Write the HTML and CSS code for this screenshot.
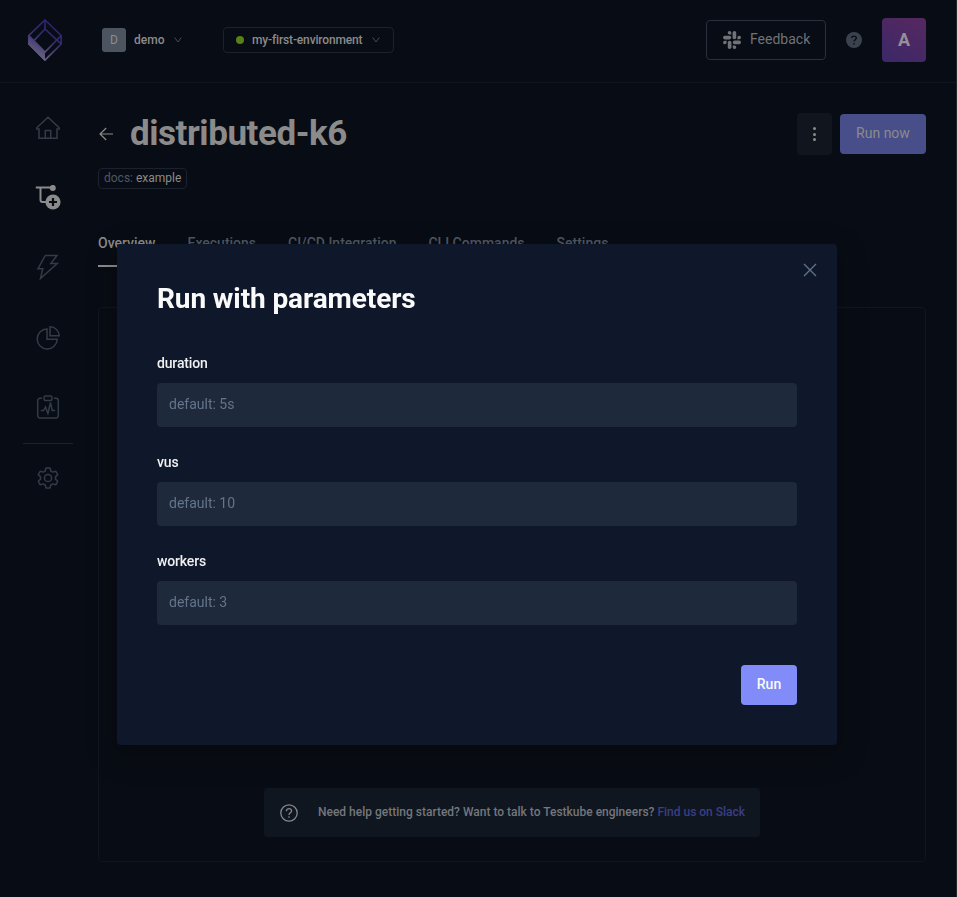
FILE: index.html
```html
<!DOCTYPE html>
<html lang="en">
<head>
<meta charset="utf-8">
<title>distributed-k6</title>
<link rel="stylesheet" href="styles.css">
</head>
<body>
<div class="app">
  <header class="topbar">
    <svg class="logo" width="36" height="44" viewBox="0 0 36 44" fill="none">
      <defs><linearGradient id="lg" x1="26" y1="4" x2="8" y2="38" gradientUnits="userSpaceOnUse"><stop offset="0" stop-color="#2b2071"/><stop offset=".45" stop-color="#352c70"/><stop offset="1" stop-color="#69647f"/></linearGradient></defs>
      <path d="M18 2 34.2 17.500V26L18 42 1.800 26V17.500Z M18 2v9 M1.800 17.500 18 34 34.200 17.500 M18 11 7.500 22 M18 11 34.200 26" stroke="url(#lg)" stroke-width="1.700"/>
      <path d="M1 17 18 34v9L1 26Z" fill="url(#lg)"/>
    </svg>
    <div class="org"><span class="org-badge">D</span><span>demo</span>
      <svg class="chev" width="8" height="6" viewBox="0 0 8 6"><path d="M.7.5 4 5 7.3.5"/></svg></div>
    <div class="env"><i class="dot"></i><span>my-first-environment</span>
      <svg class="chev" width="8" height="6" viewBox="0 0 8 6"><path d="M.7.5 4 5 7.3.5"/></svg></div>
    <div class="top-actions">
      <button class="feedback">
        <svg width="18" height="18" viewBox="0 0 18 18" fill="#6f7278"><rect x="0" y="4.8" width="8.2" height="3.6" rx="1.8"/><rect x="9.6" y="0" width="3.6" height="8.2" rx="1.8"/><rect x="9.8" y="9.6" width="8.2" height="3.6" rx="1.8"/><rect x="4.8" y="9.8" width="3.6" height="8.2" rx="1.8"/><path d="M8.3 3.6H6.6A1.8 1.8 0 1 1 8.3 1.8ZM14.4 8.3V6.6a1.8 1.8 0 1 1 1.8 1.7ZM9.7 14.4h1.7a1.8 1.8 0 1 1-1.7 1.8ZM3.6 9.7v1.7a1.8 1.8 0 1 1-1.8-1.7Z"/></svg>
        <span>Feedback</span>
      </button>
      <svg class="help" width="16" height="16" viewBox="0 0 16 16"><circle cx="8" cy="8" r="8" fill="#3b424e"/><path d="M5.6 6.1C5.7 3.5 10.3 3.5 10.3 6.1 10.3 7.6 8 7.8 8 9.6M8 11v1.5" fill="none" stroke="#080c14" stroke-width="1.4"/></svg>
      <div class="avatar">A</div>
    </div>
  </header>
  <div class="body">
    <nav class="side">
      <svg width="26" height="26" viewBox="0 0 26 26"><path d="M13 2.200 1.800 12.800V14H4v9.300h18V14h2.200v-1.200ZM10.300 23v-7.500h5.400V23"/></svg>
      <svg class="active" width="26" height="26" viewBox="0 0 26 26"><path d="M.8 2.500h17M5.500 2.500v12.500a2 2 0 0 0 2 2h5" fill="none" stroke-width="2"/><circle cx="17.800" cy="2.900" r="3" stroke="none"/><circle cx="18" cy="17" r="7.600" stroke="none"/><path d="M18 13v8M14 17h8" stroke="#080c14" stroke-width="2.200"/></svg>
      <svg width="26" height="26" viewBox="0 0 26 26"><path d="M10.300 1.500H22l-6.200 8h6.400L5.500 24.500l2.300-9.800H3Z"/></svg>
      <svg width="26" height="26" viewBox="0 0 26 26"><path d="M12 4A10 10 0 1 0 22.200 14.300H12ZM15 1.800v9h9.300a9.300 9.300 0 0 0-9.300-9Z"/></svg>
      <svg width="26" height="26" viewBox="0 0 26 26"><path d="M7 4.300H5a2.300 2.300 0 0 0-2.300 2.300v15a2.300 2.300 0 0 0 2.300 2.300h16a2.300 2.300 0 0 0 2.300-2.300v-15A2.300 2.300 0 0 0 21 4.300h-2"/><rect x="9" y="2" width="8" height="4.400" rx="1.500"/><path d="M5.800 16.500h2.700l2-3.500 2.400 6.500 2.600-11 1.700 8h3"/></svg>
      <hr>
      <svg width="26" height="26" viewBox="0 0 26 26"><path d="M11 3h4l.8 3 1.900 1.100 3-.9 2 3.500-2.200 2.200v2.200l2.200 2.200-2 3.500-3-.9-1.900 1.100-.8 3h-4l-.8-3-1.900-1.100-3 .9-2-3.500 2.200-2.200v-2.200L3.300 9.700l2-3.500 3 .9L10.200 6Z" stroke-linejoin="round"/><circle cx="13" cy="13" r="3.600"/></svg>
    </nav>
    <main class="main">
      <div class="heading">
        <svg class="back" width="16" height="16" viewBox="0 0 16 16"><path d="M15 8H1.800M8.200 2 2 8l6.200 6"/></svg>
        <h1>distributed-k6</h1>
        <button class="more"><i></i><i></i><i></i></button>
        <button class="run-now">Run now</button>
      </div>
      <div class="tag"><span>docs: </span>example</div>
      <div class="tabs"><span class="on">Overview</span><span>Executions</span><span>CI/CD Integration</span><span>CLI Commands</span><span>Settings</span></div>
      <section class="panel">
        <div class="notice">
          <svg width="18" height="18" viewBox="0 0 18 18"><circle cx="9" cy="9" r="8.200"/><path d="M6.400 7.200c0-3.500 5.300-3.300 5.200-.2C11.600 8.800 9 8.900 9 10.900M9 12.200v1.500"/></svg>
          <p>Need help getting started? Want to talk to Testkube engineers? <a>Find us on Slack</a></p>
        </div>
      </section>
    </main>
  </div>
</div>
<div class="overlay">
  <div class="modal">
    <svg class="close" width="14" height="14" viewBox="0 0 14 14"><path d="m1 1 12 12M13 1 1 13"/></svg>
    <h2>Run with parameters</h2>
    <label>duration<input placeholder="default: 5s"></label>
    <label>vus<input placeholder="default: 10"></label>
    <label>workers<input placeholder="default: 3"></label>
    <button class="run">Run</button>
  </div>
</div>
</body>
</html>
```
FILE: styles.css
```css
* { box-sizing: border-box; }
body { margin: 0; background: #080c14; font-family: Roboto, "Liberation Sans", sans-serif; color: #8b8b8b; overflow: hidden; }
button { font: inherit; border: 0; padding: 0; }
.app { height: 897px; border-right: 1px solid #25262a; display: flex; flex-direction: column; }
.topbar { height: 83px; flex: none; border-bottom: 1px solid #10161f; display: flex; align-items: center; padding: 0 30px 2px 27px; }
.logo { flex: none; }
.org { display: flex; align-items: center; margin-left: 39px; width: 121px; font-size: 12px; font-weight: 500; }
.org-badge { width: 24px; height: 24px; border-radius: 3px; background: #4c545f; display: grid; place-items: center; margin-right: 8px; color: #8d8d8d; font-weight: 400; }
.chev { fill: none; stroke: #484c54; stroke-width: 1; margin-left: 10px; }
.env { width: 171px; height: 26px; border: 1px solid #1b212d; border-radius: 4px; display: flex; align-items: center; padding-left: 12px; font-size: 12px; font-weight: 500; letter-spacing: -.15px; }
.dot { width: 8px; height: 8px; border-radius: 50%; background: #598016; margin-right: 8px; }
.top-actions { margin-left: auto; display: flex; align-items: center; gap: 20px; }
.feedback { width: 120px; height: 40px; border: 1px solid #29313e; border-radius: 4px; background: none; color: #6f7278; font-size: 14px; display: flex; align-items: center; padding-left: 16px; gap: 9px; }
.feedback span { padding-bottom: 2px; }
.avatar { width: 44px; height: 44px; border-radius: 4px; background: linear-gradient(30deg, #3b2869, #57285f); display: grid; place-items: center; padding-bottom: 1px; font-size: 18px; font-weight: 700; color: #949098; }
.body { display: flex; flex: 1; }
.side { width: 98px; padding: 32px 0 0 23px; display: flex; flex-direction: column; }
.side svg { margin: 0 0 43px 12px; fill: none; stroke: #343b48; stroke-width: 1.5; flex: none; }
.side svg.active { fill: #8b8b8b; stroke: #8b8b8b; }
.side svg:nth-of-type(1) { margin-bottom: 44px; }
.side svg:nth-of-type(3) { margin-bottom: 45px; }
.side svg:nth-of-type(5) { margin-bottom: 23px; }
.side hr { width: 50px; height: 1px; border: 0; background: #1d232e; margin: 0 0 21px; }
.main { width: 828px; }
.heading { display: flex; align-items: center; height: 42px; margin-top: 30px; }
.back { fill: none; stroke: #8b8b8b; stroke-width: 1.2; }
h1 { margin: 0 auto 0 16px; font-size: 35px; line-height: 40px; font-weight: 700; letter-spacing: -.45px; }
.more { width: 35px; height: 42px; background: #10151e; border-radius: 4px; margin-right: 8px; display: flex; flex-direction: column; align-items: center; justify-content: center; gap: 2.5px; }
.more i { width: 3px; height: 3px; border-radius: 50%; background: #8b8b8b; }
.run-now { width: 86px; height: 40px; border-radius: 4px; background: #484e8a; color: #8b8b8b; font-size: 14px; padding-bottom: 2px; }
.tag { width: 89px; height: 21px; border: 1px solid #1b222e; border-radius: 4px; font-size: 12px; line-height: 18px; padding-left: 5px; margin-top: 13px; color: #8b8b8b; white-space: pre; }
.tag span { color: #4f5864; }
.tabs { display: flex; gap: 32px; margin-top: 46px; height: 32px; font-size: 14px; line-height: 16px; font-weight: 500; color: #4f5864; }
.tabs .on { color: #8b8b8b; border-bottom: 2px solid #8b8b8b; }
.panel { margin-top: 40px; height: 555px; border: 1px solid #10151e; border-radius: 4px; display: flex; align-items: flex-end; justify-content: center; padding-bottom: 24px; }
.notice { width: 496px; height: 49px; border-radius: 4px; background: #10161f; display: flex; align-items: center; padding-left: 16px; gap: 20px; font-size: 12px; font-weight: 500; color: #74777c; }
.notice svg { fill: none; stroke: #85868a; stroke-width: 1.3; }
.notice p { margin: 0 0 2px; white-space: nowrap; }
.notice a { color: #393f86; }
.overlay { position: fixed; inset: 0; display: flex; justify-content: center; align-items: flex-start; padding: 244px 3px 0 0; }
.modal { position: relative; width: 720px; height: 501px; background: #0f172a; border-radius: 4px; padding: 37px 40px; display: flex; flex-direction: column; box-shadow: 0 6px 16px rgba(0,0,0,.16), 0 9px 28px 8px rgba(0,0,0,.1); }
.close { position: absolute; right: 20px; top: 19px; stroke: #64748b; stroke-width: 1.3; }
h2 { margin: 0 0 36px; font-size: 28px; line-height: 36px; font-weight: 700; letter-spacing: -.1px; color: #fafafa; }
label { display: flex; flex-direction: column; font-size: 14px; line-height: 20px; font-weight: 500; letter-spacing: -.15px; color: #f1f1f3; margin-bottom: 25px; }
input { margin-top: 10px; height: 44px; border: 0; border-radius: 4px; background: #1e293b; padding: 0 12px 2px; font: 400 14px Roboto, sans-serif; }
input::placeholder { color: #64748b; opacity: 1; }
.run { width: 56px; height: 40px; border-radius: 4px; background: #818cf8; color: #fafafa; font-size: 14px; font-weight: 500; align-self: flex-end; margin-top: 15px; padding-bottom: 2px; }
```
